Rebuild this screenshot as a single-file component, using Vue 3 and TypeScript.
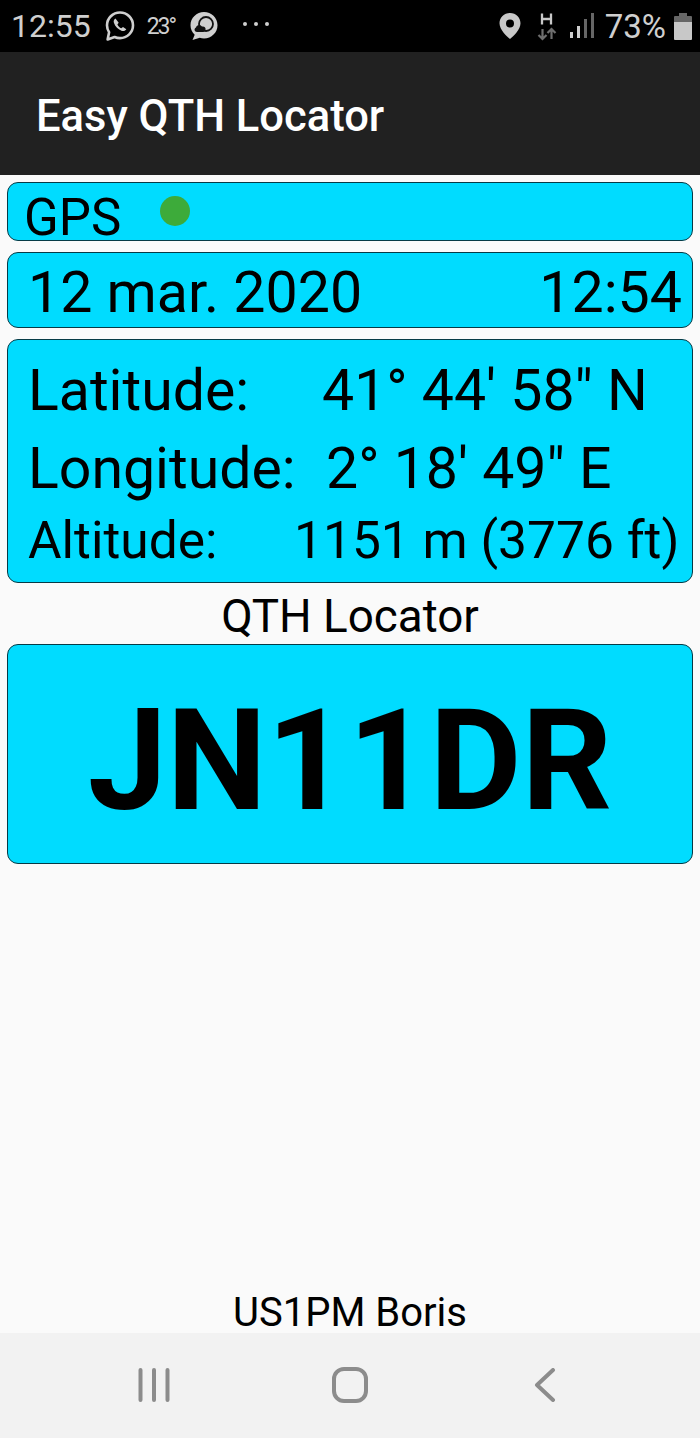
<script setup lang="ts">
const rows = [
  { label: 'Latitude:', value: "41° 44' 58\" N", cls: 'lat' },
  { label: 'Longitude:', value: "2° 18' 49\" E", cls: 'lon' },
  { label: 'Altitude:', value: '1151 m (3776 ft)', cls: 'alt' },
]
</script>

<template>
  <div class="screen">
    <header class="status">
      <div class="status-left">
        <span class="clock">12:55</span>
        <svg class="wa" width="30" height="32" viewBox="0 0 30 32" fill="none">
          <path d="M15 2.5C7.8 2.5 2 8.2 2 15.3c0 2.6.8 5 2.1 7L2.6 29.5l7-2.5c1.6.7 3.4 1.1 5.4 1.1 7.2 0 13-5.700 13-12.800S22.200 2.500 15 2.500z" stroke="#cfcfcf" stroke-width="2.600" stroke-linejoin="round"/>
          <path d="M10.500 8.500c-1.500.8-2.200 2.400-1.600 4.300 1.200 3.800 4.300 6.900 8 8.100 1.900.6 3.500-.1 4.400-1.600l-3.300-2.300-1.700 1.300c-1.700-.8-3.100-2.200-3.900-3.900l1.300-1.700z" fill="#cfcfcf"/>
        </svg>
        <span class="temp">23°</span>
        <svg class="weather" width="30" height="32" viewBox="0 0 30 32">
          <path d="M15 2C7.600 2 1.500 8 1.500 15.200c0 3.800 1.600 7.100 4.200 9.500L3.500 30l7.300-2.200c1.300.4 2.700.6 4.200.6 7.400 0 13.500-5.900 13.500-13.200S22.400 2 15 2z" fill="#cfcfcf"/>
          <circle cx="17" cy="14" r="7" fill="none" stroke="#111" stroke-width="1.800"/>
          <path d="M8 22c-2.500 0-3.500-3.500-1-4.500.5-3 4.500-3.500 6-1 2.500-.5 4 1.500 3.500 3 0 1.500-1 2.500-2.500 2.500z" fill="#111"/>
        </svg>
        <span class="dots"><i></i><i></i><i></i></span>
      </div>
      <div class="status-right">
        <svg class="pin" width="22" height="28" viewBox="0 0 22 28">
          <path fill-rule="evenodd" d="M11 1C5 1 .500 5.600.500 11.200.500 17.500 7.500 24 11 27c3.500-3 10.500-9.500 10.500-15.800C21.500 5.600 17 1 11 1zm0 6.500a4 4 0 1 1 0 8 4 4 0 0 1 0-8z" fill="#c8c8c8"/>
        </svg>
        <svg class="net" width="20" height="29" viewBox="0 0 20 29">
          <path d="M5 1.500v11M14 1.500v11M5 7h9" stroke="#c8c8c8" stroke-width="2.300" fill="none"/>
          <path d="M5.500 17v10M1.500 23l4 4 4-4" stroke="#6e6e6e" stroke-width="2.200" fill="none"/>
          <path d="M14.500 27V17M10.500 21l4-4 4 4" stroke="#6e6e6e" stroke-width="2.200" fill="none"/>
        </svg>
        <svg class="signal" width="24" height="26" viewBox="0 0 24 26">
          <rect x="0" y="19" width="3" height="6" fill="#d0d0d0"/>
          <rect x="7" y="13" width="3" height="12" fill="#d0d0d0"/>
          <rect x="14" y="6" width="3" height="19" fill="#666"/>
          <rect x="21" y="0" width="3" height="25" fill="#666"/>
        </svg>
        <span class="pct">73%</span>
        <svg class="battery" width="18" height="27" viewBox="0 0 18 27">
          <path d="M5 0h8v3h4a1 1 0 0 1 1 1v5H0V4a1 1 0 0 1 1-1h4z" fill="#666"/>
          <path d="M0 9h18v17a1 1 0 0 1-1 1H1a1 1 0 0 1-1-1z" fill="#c8c8c8"/>
        </svg>
      </div>
    </header>

    <div class="appbar">Easy QTH Locator</div>

    <main class="content">
      <section class="card gps">
        <span class="gps-label">GPS</span>
        <i class="dot"></i>
      </section>
      <section class="card datetime">
        <span>12 mar. 2020</span>
        <span>12:54</span>
      </section>
      <section class="card coords">
        <div v-for="r in rows" :key="r.label" class="row" :class="r.cls">
          <span class="lbl">{{ r.label }}</span>
          <span>{{ r.value }}</span>
        </div>
      </section>
      <div class="caption">QTH Locator</div>
      <section class="card locator">JN11DR</section>
      <div class="spacer"></div>
      <div class="author">US1PM Boris</div>
    </main>

    <nav class="navbar">
      <svg width="36" height="34" viewBox="0 0 36 34">
        <path d="M4.500 2v30M18 2v30M31.500 2v30" stroke="#8c8c8c" stroke-width="4" stroke-linecap="round"/>
      </svg>
      <svg width="36" height="36" viewBox="0 0 36 36" fill="none">
        <rect x="2" y="2" width="32" height="32" rx="10" stroke="#8c8c8c" stroke-width="4"/>
      </svg>
      <svg width="36" height="34" viewBox="0 0 36 34" fill="none">
        <path d="M26 2 10 17l16 15" stroke="#8c8c8c" stroke-width="4" stroke-linecap="round" stroke-linejoin="round"/>
      </svg>
    </nav>
  </div>
</template>

<style>
html, body { margin: 0; padding: 0; }
</style>

<style scoped>
.screen {
  width: 700px;
  height: 1438px;
  display: flex;
  flex-direction: column;
  background: #fafafa;
  font-family: Roboto, "Liberation Sans", sans-serif;
  color: #000;
  overflow: hidden;
}
.status {
  height: 52px;
  flex: none;
  background: #000;
  color: #cfcfcf;
  display: flex;
  justify-content: space-between;
  align-items: center;
  padding: 0 8px 0 11px;
  box-sizing: border-box;
}
.status-left, .status-right { display: flex; align-items: center; }
.clock { font-size: 32px; line-height: 40px; }
.wa { margin-left: 14px; }
.temp { font-size: 23px; margin-left: 12px; letter-spacing: -2px; }
.weather { margin-left: 14px; }
.dots { display: flex; gap: 7px; margin-left: 24px; margin-bottom: 4px; }
.dots i { width: 4px; height: 4px; border-radius: 50%; background: #cfcfcf; }
.net { margin-left: 16px; }
.signal { margin-left: 13px; }
.pct { font-size: 33px; margin-left: 11px; }
.battery { margin-left: 8px; }
.appbar {
  height: 123px;
  flex: none;
  box-sizing: border-box;
  background: #212121;
  color: #fff;
  font-size: 43.500px;
  font-weight: 500;
  display: flex;
  align-items: center;
  padding: 5px 0 0 36px;
}
.content {
  flex: 1;
  display: flex;
  flex-direction: column;
  padding: 7px 7px 0;
  min-height: 0;
}
.card {
  background: #00dcff;
  border: 1px solid #063b46;
  border-radius: 11px;
  box-sizing: border-box;
}
.gps {
  height: 59px;
  padding-left: 16px;
  display: flex;
}
.gps-label {
  font-size: 51px;
  line-height: 44px;
  align-self: flex-end;
}
.dot {
  width: 30px;
  height: 30px;
  border-radius: 50%;
  background: #3dab3a;
  margin: 13px 0 0 39px;
}
.datetime {
  height: 76px;
  margin-top: 11px;
  font-size: 57.300px;
  line-height: 80px;
  display: flex;
  justify-content: space-between;
  padding: 0 10px 0 20px;
}
.coords {
  height: 244px;
  margin-top: 11px;
  padding: 11px 0 0 20px;
}
.row { display: flex; white-space: nowrap; }
.lat { font-size: 57.200px; line-height: 79px; }
.lon { font-size: 57.200px; line-height: 77px; }
.alt { font-size: 51.500px; line-height: 68px; }
.lat .lbl { width: 294px; }
.lon .lbl { width: 298px; }
.alt .lbl { width: 266px; }
.caption {
  text-align: center;
  font-size: 45.800px;
  line-height: 62px;
  margin-top: 3px;
  height: 55px;
}
.locator {
  height: 220px;
  margin-top: 3px;
  display: flex;
  align-items: center;
  justify-content: center;
  padding-top: 14px;
  font-size: 141.700px;
  font-weight: 700;
}
.spacer { flex: 1; }
.author {
  text-align: center;
  font-size: 40px;
  line-height: 44px;
  margin-bottom: -2px;
}
.navbar {
  height: 105px;
  flex: none;
  background: #f2f2f2;
  display: flex;
  align-items: center;
  justify-content: space-between;
  padding: 0 137px 2px 136px;
  box-sizing: border-box;
}
</style>
